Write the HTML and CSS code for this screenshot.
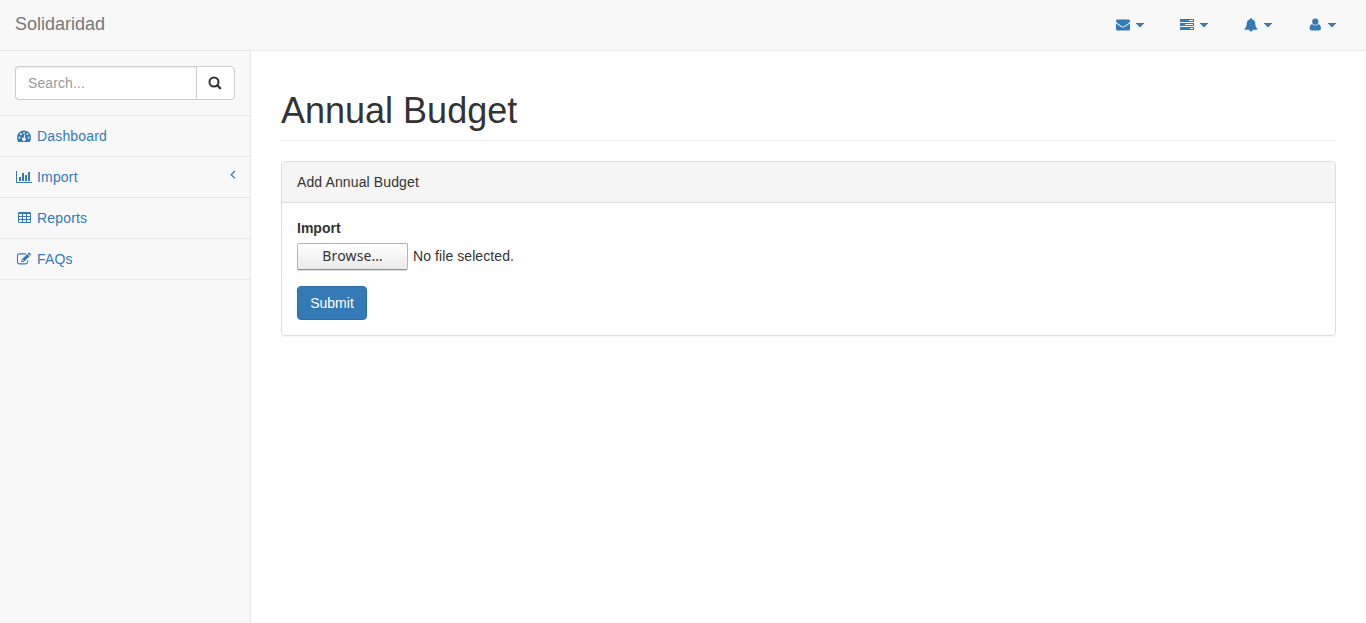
FILE: index.html
```html
<!DOCTYPE html>
<html lang="en">
<head>
<meta charset="utf-8">
<title>Annual Budget</title>
<link rel="stylesheet" href="styles.css">
</head>
<body>
<header class="navbar">
  <a class="brand">Solidaridad</a>
  <nav class="top-links">
    <a class="top-link"><svg class="icon" viewBox="0 0 18 14"><path d="M2 2.8Q2 1.5 3.3 1.5H14.7Q16 1.5 16 2.8Q16 4.2 14.7 5.1L10.6 8Q9 9.1 7.4 8L3.3 5.1Q2 4.2 2 2.8ZM2 5.3L6.8 8.8Q9 10.3 11.2 8.8L16 5.3V11.2Q16 12.5 14.7 12.5H3.3Q2 12.5 2 11.2Z"/></svg><span class="caret"></span></a>
    <a class="top-link"><svg class="icon" viewBox="0 0 18 14"><path fill-rule="evenodd" d="M2 1H16V4H2ZM11 2V3H15V2ZM2 5H16V8H2ZM7 6V7H15V6ZM2 9H16V12H2ZM12 10V11H15V10Z"/></svg><span class="caret"></span></a>
    <a class="top-link"><svg class="icon" viewBox="0 0 18 14"><path d="M8.2 .8A.8.8 0 0 1 9.8 .8V1.2C12 1.6 13.2 3.2 13.2 5.3C13.2 8 14 9.5 15.5 10.8Q15.3 11.8 14.4 11.8H10.8A1.8 1.8 0 0 1 7.2 11.8H3.6Q2.7 11.8 2.5 10.8C4 9.5 4.8 8 4.8 5.3C4.8 3.2 6 1.6 8.2 1.2Z"/></svg><span class="caret"></span></a>
    <a class="top-link"><svg class="icon" viewBox="0 0 18 14"><circle cx="9.3" cy="3.7" r="3.1"/><path d="M6.4 6.2Q9.3 8.6 12.2 6.2C14.5 6.2 14.9 8.7 14.9 10.5Q14.9 12.4 12.9 12.4H5.7Q3.7 12.4 3.7 10.5C3.7 8.7 4.1 6.2 6.4 6.2Z"/></svg><span class="caret"></span></a>
  </nav>
</header>
<div class="layout">
  <aside class="sidebar">
    <div class="search">
      <input class="search-input" type="text" placeholder="Search...">
      <button class="search-button" aria-label="Search"><svg class="search-icon" viewBox="0 0 14 14"><circle cx="6" cy="6" r="4.5" fill="none" stroke="currentColor" stroke-width="2"/><path d="M9.3 9.3L12.2 12.2" stroke="currentColor" stroke-width="2.3" stroke-linecap="round"/></svg></button>
    </div>
    <a class="side-link"><svg class="icon" viewBox="0 0 18 14"><path fill-rule="evenodd" d="M2 8.5A7 7 0 0 1 16 8.5Q16 11 14.9 12.9H3.1Q2 11 2 8.5ZM3.6 7.7V9.4H5.3V7.7ZM5 4.3V6H6.7V4.3ZM8.2 2.9V4.6H9.8V2.9ZM11.7 4.3V6H13.2V4.3ZM12.9 7.7V9.4H14.5V7.7ZM9.5 5.3L8.7 8.6A1.7 1.7 0 1 0 9.8 8.8L10.4 5.5Z"/></svg><span class="side-text">Dashboard</span></a>
    <a class="side-link"><svg class="icon" viewBox="0 0 18 14"><path d="M1 1H2V12H17V13H1ZM4 7H6V11H4ZM7 3H9V11H7ZM10 5H12V11H10ZM13 2H15V11H13Z"/></svg><span class="side-text">Import</span><svg class="arrow" viewBox="0 0 6 10"><path d="M4.9 1L1.2 4.7L4.9 8.4" fill="none" stroke="currentColor" stroke-width="1.3"/></svg></a>
    <a class="side-link"><svg class="icon" viewBox="0 0 18 14"><path fill-rule="evenodd" d="M4.2 1H14.8Q16 1 16 2.2V10.8Q16 12 14.8 12H4.2Q3 12 3 10.8V2.2Q3 1 4.2 1ZM4 3V5H7V3ZM8 3V5H11V3ZM12 3V5H15V3ZM4 6V8H7V6ZM8 6V8H11V6ZM12 6V8H15V6ZM4 9V11H7V9ZM8 9V11H11V9ZM12 9V11H15V9Z"/></svg><span class="side-text">Reports</span></a>
    <a class="side-link"><svg class="icon" viewBox="0 0 18 14"><path d="M11 1.9H4.4Q2.5 1.9 2.5 3.8V10Q2.5 11.9 4.4 11.9H10.6Q12.5 11.9 12.5 10V8.4" fill="none" stroke="currentColor" stroke-width="1.1"/><path fill-rule="evenodd" d="M12.3 1.9L14.6 4.2L8.8 10H6.4V7.7ZM7.4 8V9H8.5L9 8.5L7.9 7.5ZM12.8 1.4L13.5 .8Q14 .3 14.6 .8L15.7 1.9Q16.2 2.4 15.7 3L15.1 3.7Z"/></svg><span class="side-text">FAQs</span></a>
  </aside>
  <main class="content">
    <h1 class="page-header"><span class="page-title">Annual Budget</span></h1>
    <section class="panel">
      <div class="panel-heading"><span class="panel-title">Add Annual Budget</span></div>
      <div class="panel-body">
        <label class="field-label">Import</label>
        <div class="file-field"><button class="browse">Browse…</button><span class="file-text">No file selected.</span></div>
        <button class="submit">Submit</button>
      </div>
    </section>
  </main>
</div>
</body>
</html>
```
FILE: styles.css
```css
* { box-sizing: border-box; }
body {
  margin: 0;
  height: 623px;
  display: flex;
  flex-direction: column;
  overflow: hidden;
  background: #fff;
  color: #333;
  font: 14px/20px "Liberation Sans", Arial, sans-serif;
}
.navbar {
  height: 51px;
  flex: none;
  display: flex;
  align-items: center;
  justify-content: space-between;
  padding: 0 30px 0 15px;
  background: #f8f8f8;
  border-bottom: 1px solid #e7e7e7;
}
.brand { padding-bottom: 2px; font-size: 18px; color: #777; }
.top-links { display: flex; gap: 34px; color: #337ab7; }
.top-link { display: flex; align-items: center; gap: 4px; }
.icon { width: 18px; height: 14px; flex: none; fill: currentColor; }
.caret {
  border-top: 5px solid;
  border-left: 4.5px solid transparent;
  border-right: 4.5px solid transparent;
  width: 8px;
  height: 5px;
  border: 0;
  background: currentColor;
  clip-path: polygon(0 0, 100% 0, 100% 15%, 50% 100%, 0 15%);
}
.layout { flex: 1; display: flex; }
.sidebar {
  width: 251px;
  flex: none;
  background: #f8f8f8;
  border-right: 1px solid #e7e7e7;
}
.search {
  display: flex;
  height: 65px;
  padding: 15px;
  border-bottom: 1px solid #e7e7e7;
}
.search-input {
  width: 181px;
  height: 34px;
  padding: 6px 12px;
  border: 1px solid #ccc;
  border-right: 0;
  border-radius: 4px 0 0 4px;
  box-shadow: inset 0 1px 1px rgba(0, 0, 0, .075);
  font: inherit;
  letter-spacing: .1px;
}
.search-input::placeholder { color: #999; opacity: 1; }
.search-button {
  width: 39px;
  height: 34px;
  flex: none;
  padding: 0 1px 0 0;
  display: flex;
  align-items: center;
  justify-content: center;
  background: #fff;
  border: 1px solid #ccc;
  border-radius: 0 4px 4px 0;
  color: #333;
}
.search-icon { width: 14px; height: 14px; }
.side-link {
  display: flex;
  align-items: center;
  height: 41px;
  padding: 0 14px 0 15px;
  gap: 4px;
  border-bottom: 1px solid #e7e7e7;
  color: #337ab7;
}
.side-text { letter-spacing: .17px; }
.arrow { width: 6px; height: 10px; margin: 0 0 5px auto; }
.content { flex: 1; padding: 39px 30px 0; }
.page-header {
  height: 51px;
  margin: 0 0 20px;
  padding-top: 1px;
  border-bottom: 1px solid #eee;
  font-size: 36px;
  line-height: 40px;
}
.page-title { font-weight: 400; }
.panel {
  border: 1px solid #ddd;
  border-radius: 4px;
  box-shadow: 0 1px 1px rgba(0, 0, 0, .05);
}
.panel-heading {
  padding: 10px 15px;
  background: #f5f5f5;
  border-bottom: 1px solid #ddd;
  border-radius: 3px 3px 0 0;
}
.panel-title { letter-spacing: .12px; }
.panel-body { padding: 15px; }
.field-label { display: block; margin-bottom: 5px; font-weight: 700; }
.file-field { display: flex; gap: 5px; height: 28px; margin-bottom: 15px; }
.browse {
  width: 111px;
  height: 27px;
  padding: 0 0 1px;
  border: 1px solid #b4b4b4;
  border-bottom-color: #8e8e8e;
  border-radius: 2px;
  box-shadow: 0 1px 0 #ddd;
  background: linear-gradient(#fff, #eaeaea);
  color: #333;
  font: 14px/20px "Noto Sans", sans-serif;
  letter-spacing: .15px;
}
.file-text { line-height: 26px; letter-spacing: .08px; }
.submit {
  display: block;
  height: 34px;
  width: 70px;
  padding: 0;
  background: #337ab7;
  border: 1px solid #2e6da4;
  border-radius: 4px;
  color: #fff;
  font: inherit;
}
```
